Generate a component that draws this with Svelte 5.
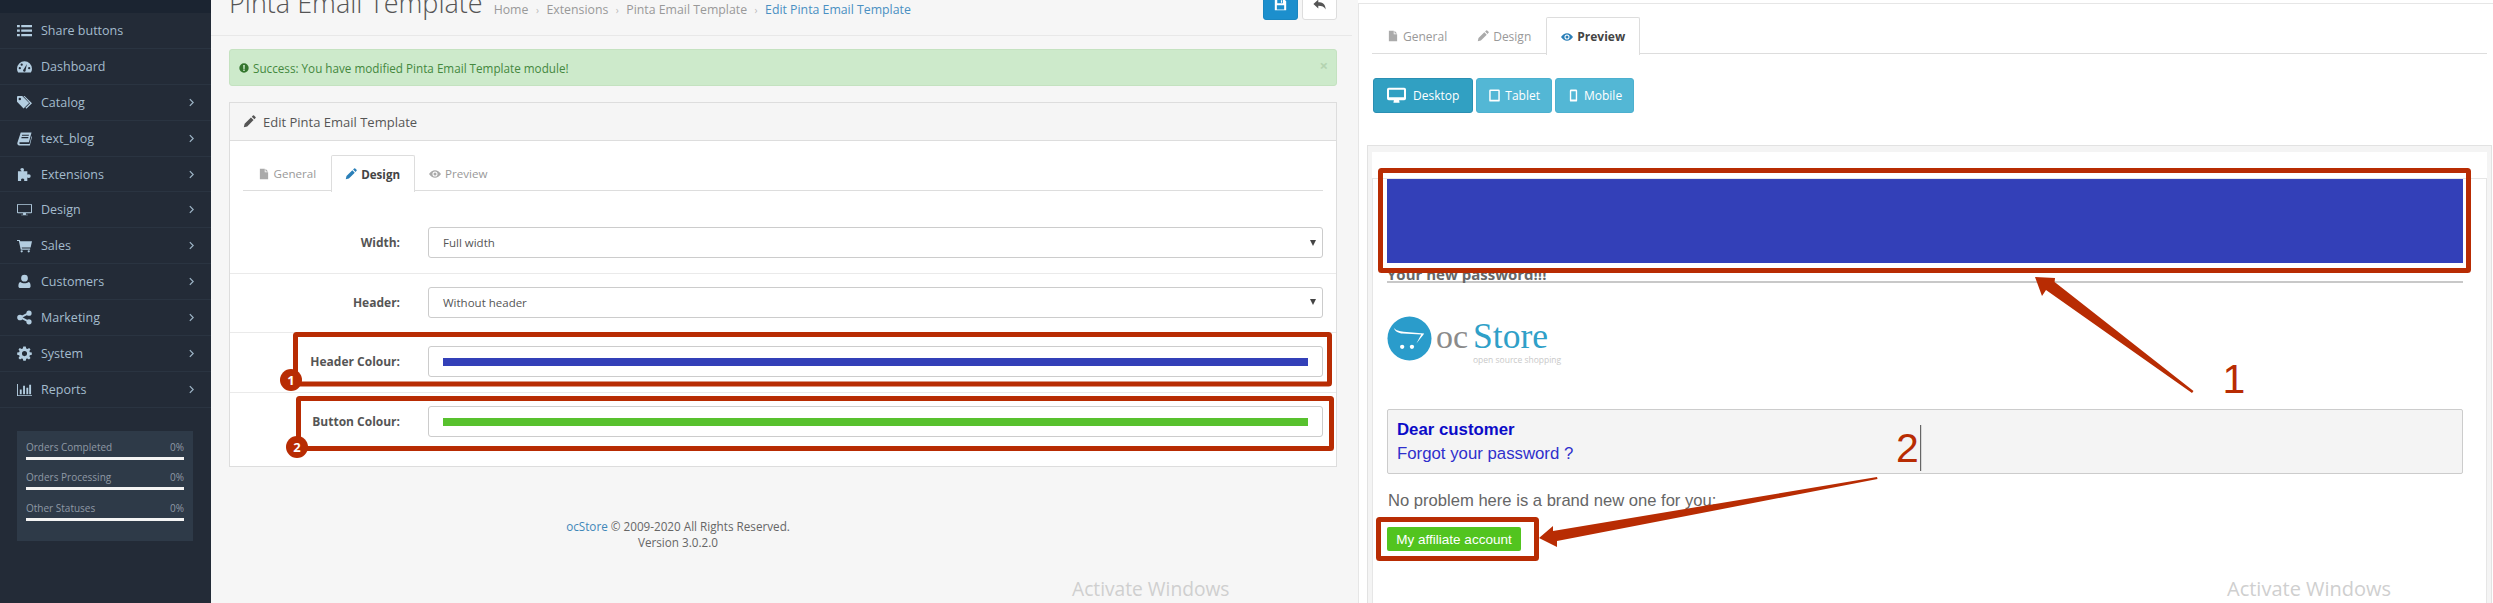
<script>
  const icons = {
    list: "M0 2h3v2.4H0zM4.5 2H16v2.4H4.5zM0 6.8h3v2.4H0zM4.5 6.8H16v2.4H4.5zM0 11.6h3V14H0zM4.5 11.6H16V14H4.5z",
    gauge: "M8 2.5a8 8 0 0 0-8 8c0 1.5.4 2.8 1.2 4h13.6c.8-1.2 1.2-2.5 1.2-4a8 8 0 0 0-8-8zM3 8.6a1.2 1.2 0 1 0 0 2.4 1.2 1.2 0 0 0 0-2.4zM5 4.8a1.2 1.2 0 1 0 0 2.4 1.2 1.2 0 0 0 0-2.4zM10.6 5.4 7.2 11a1.4 1.4 0 1 0 2 .8zM13 8.6a1.2 1.2 0 1 0 0 2.4 1.2 1.2 0 0 0 0-2.4z",
    tags: "M0 2v5.2L7 14.5 13 8.5 5.6 1H1a1 1 0 0 0-1 1zM3 3a1.3 1.3 0 1 0 0 2.6A1.3 1.3 0 0 0 3 3zM8 1l8 7.7-6 6-1-1 4.9-5L6.8 1z",
    book: "M4 1.5h11.5l-2.8 10.6H3.4c-1.4 0-1.4 1.7 0 1.7h10l2-8.2.6.6-2.3 9.2H2.6C.8 15.4 0 14 .4 12.6zM5.5 4l-.3 1.1h7.3l.3-1.1zM4.9 6.5l-.3 1.1h7.3l.3-1.1z",
    puzzle: "M5.5 1a2 2 0 0 1 2 2c0 .6-.5 1-.5 1.5h4V8c.5 0 .9-.4 1.6-.4a2 2 0 0 1 0 4c-.7 0-1.1-.4-1.6-.4v3.8H7.6c0-.6.4-1 .1-1.6a1.8 1.8 0 0 0-3.4 0c-.2.6.2 1 .2 1.6H1V4.5h3.9c0-.5-1.4-1-1.4-1.5a2 2 0 0 1 2-2z",
    desktop: "M1 2h14a1 1 0 0 1 1 1v8a1 1 0 0 1-1 1H1a1 1 0 0 1-1-1V3a1 1 0 0 1 1-1zM1 3v8h14V3zM6.5 12h3v1.5h2v.7h-7v-.7h2z",
    cart: "M0 2h3l.5 1.5H16l-1.5 6.5H5l.3 1.2H14v1.3H4L2 3.3H0zM5 13a1.2 1.2 0 1 1 0 2.4A1.2 1.2 0 0 1 5 13zM12.5 13a1.2 1.2 0 1 1 0 2.4 1.2 1.2 0 0 1 0-2.4z",
    user: "M8 .8a3.6 3.6 0 1 1 0 7.2A3.6 3.6 0 0 1 8 .8zM3.5 8.5c1 .8 2.8 1.3 4.5 1.3s3.500-.5 4.500-1.300c1.500.5 2 2.500 2 4.500 0 1.200-.8 2-2 2h-9c-1.200 0-2-.8-2-2 0-2 .5-4 2-4.500z",
    share: "M3.200 5a3 3 0 1 1 0 6 3 3 0 0 1 0-6zM12.800 .6a2.800 2.800 0 1 1 0 5.600 2.800 2.800 0 0 1 0-5.600zM12.800 9.800a2.800 2.800 0 1 1 0 5.600 2.800 2.800 0 0 1 0-5.600zM4 6.700l7.500-4 .8 1.700-7.500 4zM4.800 7.300l7.500 4-.8 1.700-7.500-4z",
    cog: "M6.700 .5H9.300L9.800 2.600 11.200 3.200 13 2 14.400 3.600 13.200 5.200 13.700 6.600 15.800 7V9.400L13.700 9.800 13.200 11 14.400 12.800 12.800 14.400 11.100 13.200 9.800 13.700 9.300 15.800H6.700L6.200 13.700 4.900 13.200 3.200 14.400 1.600 12.800 2.800 11 2.300 9.800 .2 9.400V7L2.300 6.600 2.800 5.200 1.600 3.600 3 2 4.800 3.200 6.200 2.600ZM8 5.400a2.700 2.700 0 1 0 0 5.400 2.700 2.700 0 0 0 0-5.400z",
    bars: "M0 2h1v12h15v1H0zM3 8h2v5H3zM6.500 4h2v9h-2zM10 6h2v7h-2zM13 3h2v10h-2z",
    file: "M2.500 1H9v4.500h4.500V15h-11zM10 1l3.500 3.500H10z",
    pencil: "M1 15l1-4.200 7.800-7.800 3.200 3.200-7.800 7.800zM10.800 2l1.400-1.400a1 1 0 0 1 1.400 0l1.800 1.800a1 1 0 0 1 0 1.400L14 5.200z",
    eye: "M0 8c2-3 5-5 8-5s6 2 8 5c-2 3-5 5-8 5s-6-2-8-5zM8 4.600a3.400 3.400 0 1 0 0 6.800 3.400 3.400 0 0 0 0-6.800zM8 6a2 2 0 1 1 0 4 2 2 0 0 1 0-4z",
    monitor: "M1.500 1.500h13a1.500 1.500 0 0 1 1.500 1.500v7.600a1.500 1.500 0 0 1-1.500 1.500h-13A1.500 1.500 0 0 1 0 10.600V3a1.500 1.500 0 0 1 1.500-1.500zM1.700 3.200v6.200h12.600V3.200zM5.800 12.100h4.400l.4 2H5.400z",
    tablet: "M3 .5h10a1.500 1.500 0 0 1 1.500 1.500v12a1.500 1.500 0 0 1-1.500 1.500H3A1.500 1.500 0 0 1 1.500 14V2A1.500 1.500 0 0 1 3 .5zM3.300 2.600v10.600h9.400V2.600z",
    phone: "M5 .5h6A1.500 1.500 0 0 1 12.500 2v12a1.500 1.500 0 0 1-1.500 1.500H5A1.500 1.500 0 0 1 3.500 14V2A1.500 1.500 0 0 1 5 .5zM5.200 2.800v10h5.600v-10z",
    save: "M1 1h11l3 3v11H1zM4 2v4.500h7V2zM3.500 9v5h9V9zM8.500 2.800h1.500v3H8.500z",
    reply: "M6.500 2v3.200c5 0 9 2 9 8.800-1.500-3.500-4.500-4.600-9-4.600V13L.5 7.500z",
    alert: "M8 .5a7.500 7.500 0 1 1 0 15 7.500 7.500 0 0 1 0-15zM6.700 3.200l.3 6.200h2l.3-6.200zM6.800 10.500v2.300h2.400v-2.300z"
  };
  const nav = [
    ["list", "Share buttons", false], ["gauge", "Dashboard", false], ["tags", "Catalog", true],
    ["book", "text_blog", true], ["puzzle", "Extensions", true], ["desktop", "Design", true],
    ["cart", "Sales", true], ["user", "Customers", true], ["share", "Marketing", true],
    ["cog", "System", true], ["bars", "Reports", true]
  ];
  const stats = ["Orders Completed", "Orders Processing", "Other Statuses"];
  const crumbs = ["Home", "Extensions", "Pinta Email Template"];
</script>

{#snippet icon(name, cls)}
  <svg class={cls} viewBox="0 0 16 16" fill-rule={name === "share" ? "nonzero" : "evenodd"} fill="currentColor" aria-hidden="true"><path d={icons[name]} /></svg>
{/snippet}

<div class="app">
  <aside class="side">
    <div class="strip"></div>
    <ul class="nav">
      {#each nav as [ic, label, more]}
        <li>
          {@render icon(ic, "nav-ic")}
          <span class="nav-label">{label}</span>
          {#if more}
            <svg class="chev" viewBox="0 0 6 10" aria-hidden="true"><path d="M1 1l4 4-4 4" fill="none" stroke="currentColor" stroke-width="1.500" /></svg>
          {/if}
        </li>
      {/each}
    </ul>
    <div class="stats">
      {#each stats as s}
        <div class="stat">
          <div class="stat-row"><span>{s}</span><span>0%</span></div>
          <div class="stat-bar"></div>
        </div>
      {/each}
    </div>
  </aside>

  <main class="left">
    <header class="page-head">
      <h1>Pinta Email Template</h1>
      <nav class="crumbs">
        {#each crumbs as c}
          <span>{c}</span><i>›</i>
        {/each}
        <span class="current">Edit Pinta Email Template</span>
      </nav>
      <div class="actions">
        <div class="act primary">{@render icon("save", "act-ic")}</div>
        <div class="act">{@render icon("reply", "act-ic")}</div>
      </div>
    </header>

    <div class="alert">
      {@render icon("alert", "alert-ic")}
      <span>Success: You have modified Pinta Email Template module!</span>
      <b class="close">×</b>
    </div>

    <section class="panel">
      <div class="panel-head">
        {@render icon("pencil", "head-ic")}
        <span>Edit Pinta Email Template</span>
      </div>
      <div class="panel-body">
        <div class="tabs">
          <div class="tab">{@render icon("file", "tab-ic")}General</div>
          <div class="tab active">{@render icon("pencil", "tab-ic")}Design</div>
          <div class="tab">{@render icon("eye", "tab-ic")}Preview</div>
        </div>
        <div class="form">
          <div class="row">
            <label>Width:</label>
            <div class="control"><span>Full width</span><em class="caret"></em></div>
          </div>
          <div class="row">
            <label>Header:</label>
            <div class="control"><span>Without header</span><em class="caret"></em></div>
          </div>
          <div class="row">
            <label>Header Colour:</label>
            <div class="control"><div class="swatch blue"></div></div>
          </div>
          <div class="row">
            <label>Button Colour:</label>
            <div class="control"><div class="swatch green"></div></div>
          </div>
        </div>
      </div>
    </section>

    <footer class="foot">
      <div><a href="#top">ocStore</a> © 2009-2020 All Rights Reserved.</div>
      <div>Version 3.0.2.0</div>
    </footer>
  </main>

  <section class="right">
    <div class="tabs">
      <div class="tab">{@render icon("file", "tab-ic")}General</div>
      <div class="tab">{@render icon("pencil", "tab-ic")}Design</div>
      <div class="tab active">{@render icon("eye", "tab-ic")}Preview</div>
    </div>
    <div class="devices">
      <div class="dev on">{@render icon("monitor", "dev-ic big")}Desktop</div>
      <div class="dev">{@render icon("tablet", "dev-ic")}Tablet</div>
      <div class="dev">{@render icon("phone", "dev-ic")}Mobile</div>
    </div>
    <div class="frame">
      <div class="sheet">
        <div class="inner">
          <div class="mail-head"></div>
          <div class="mail-title">Your new password!!!</div>
          <div class="logo">
            <svg class="logo-mark" viewBox="0 0 46 46" aria-hidden="true">
              <circle cx="23" cy="23" r="22.500" fill="#2a9ccb" />
              <path d="M7 12c2 3 6 3.500 10 4l21 2-1 1.500-7 8.500 5-9-19-1c-4-.5-8-2-9-6z" fill="#fff" />
              <circle cx="15.500" cy="31.500" r="2.200" fill="#fff" />
              <circle cx="25.500" cy="31.500" r="2.200" fill="#fff" />
            </svg>
            <div class="logo-words">
              <div class="logo-name"><span class="oc">oc</span><span class="store">Store</span></div>
              <div class="logo-tag">open source shopping</div>
            </div>
          </div>
          <div class="greet">
            <div class="dear">Dear customer</div>
            <div class="forgot">Forgot your password ?</div>
          </div>
          <p class="copy">No problem here is a brand new one for you:</p>
          <div class="cta">My affiliate account</div>
        </div>
      </div>
    </div>
  </section>

  <div class="watermark wm-left">Activate Windows</div>
  <div class="watermark wm-right">Activate Windows</div>

  <svg class="notes" viewBox="0 0 2493 603" aria-hidden="true">
    <g fill="none" stroke="#b82c03" stroke-width="5" stroke-linejoin="round">
      <rect x="295.500" y="334.500" width="1034" height="49.500" rx="1" />
      <rect x="298.500" y="398.500" width="1033" height="50" rx="1" />
      <rect x="1380.500" y="170.500" width="1088" height="100" rx="1" />
      <rect x="1378.500" y="519.500" width="158" height="39" rx="1" />
    </g>
    <g fill="#b82c03">
      <circle cx="291" cy="380" r="11" />
      <circle cx="297" cy="447" r="11" />
      <polygon points="2035,277 2055,278 2054.600,282 2193.500,391 2192,393 2046,290 2042,296" />
      <polygon points="1539,538 1553,526 1553,531 1877,477 1877.500,479 1557,541 1557,547" />
    </g>
    <g class="badge">
      <text x="291" y="385">1</text>
      <text x="297" y="452">2</text>
    </g>
    <g class="digit">
      <text x="2222.500" y="393">1</text>
      <text x="1896" y="462">2</text>
    </g>
    <rect x="1920" y="425" width="1.200" height="46" fill="#666" />
  </svg>
</div>

<style>
  :global(body) { margin: 0; background: #fff; }
  * { box-sizing: border-box; }
  .app {
    position: relative; display: flex; width: 2493px; height: 603px; overflow: hidden;
    font-family: "Open Sans", "Liberation Sans", sans-serif; font-size: 12px; color: #555;
  }

  .side { flex: 0 0 211px; background: #232b37; color: #a4bccd; }
  .strip { height: 13px; background: #1b2431; }
  .nav { list-style: none; margin: 0; padding: 0; }
  .nav li {
    display: flex; align-items: center; height: 35.900px; padding: 0 17px 0 17px;
    border-bottom: 1px solid #2a3441;
  }
  .nav-ic { width: 15px; height: 15px; flex: none; color: #b3cde0; }
  .nav-label { margin-left: 9px; font-size: 12.500px; flex: 1; }
  .chev { width: 5px; height: 9px; color: #9db4c5; }
  .stats { margin: 23px 18px 0 17px; padding: 9px 9px 10px; background: #2e3a48; color: #8e99a5; font-size: 10px; }
  .stat { height: 30.500px; }
  .stat-row { display: flex; justify-content: space-between; line-height: 14px; }
  .stat-bar { height: 3px; margin-top: 3px; background: #f4f4f4; }

  .left { flex: 0 0 1147px; padding: 0 21px 0 18px; background: #f6f6f6; }
  .page-head {
    display: flex; align-items: flex-start; height: 36px; margin: 0 -15px 0 -18px; padding: 0 15px 0 18px;
    border-bottom: 1px solid #e8e8e8; overflow: hidden;
  }
  h1 { margin: -17px 0 0; font-size: 27px; font-weight: 300; line-height: 40px; color: #555; white-space: nowrap; }
  .crumbs { display: flex; align-items: center; margin: 1px 0 0 11px; height: 17px; color: #999; font-size: 12.300px; }
  .crumbs i { margin: 0 7.500px; font-style: normal; font-size: 10px; color: #bbb; }
  .current { color: #4a90c2; }
  .actions { display: flex; gap: 4px; margin-left: auto; margin-top: -16px; }
  .act {
    display: flex; align-items: flex-end; justify-content: center; width: 35px; height: 36px; padding-bottom: 8px;
    background: #fff; border: 1px solid #ddd; border-radius: 3px; color: #555;
  }
  .act.primary { background: #1c8fcd; border-color: #1a86c0; color: #fff; }
  .act-ic { width: 13px; height: 13px; }

  .alert {
    display: flex; align-items: center; height: 37px; margin-top: 13px; padding: 0 9px;
    background: #cdeacb; border: 1px solid #c4e2c0; border-radius: 3px; color: #44883e; font-size: 11.700px;
  }
  .alert-ic { width: 10px; height: 10px; margin-right: 4px; color: #33752d; }
  .close { margin-left: auto; font-size: 15px; color: #b4d3b1; line-height: 1; margin-top: -4px; margin-right: -1px; }

  .panel { margin-top: 16px; background: #fff; border: 1px solid #ddd; }
  .panel-head {
    display: flex; align-items: center; height: 38px; padding: 0 13px; background: #f5f5f5;
    border-bottom: 1px solid #ddd; color: #555; font-size: 13px;
  }
  .head-ic { width: 13px; height: 13px; margin-right: 7px; color: #555; }
  .panel-body { padding: 14px 13px 14px; }

  .tabs { display: flex; height: 36px; border-bottom: 1px solid #ddd; }
  .tab {
    display: flex; align-items: center; height: 36px; padding: 0 13.500px; color: #999; font-size: 11.600px;
    border: 1px solid transparent; border-bottom: 0;
  }
  .tab-ic { width: 12px; height: 12px; margin-right: 4px; color: #aaa; }
  .tab.active {
    background: #fff; border-color: #ddd; color: #444; font-weight: 700; height: 37px; border-radius: 2px 2px 0 0;
  }
  .tab.active .tab-ic { color: #2a7fb8; }
  .right .tabs { height: 37px; }
  .right .tab { height: 37px; padding: 0 14px; font-size: 12px; }
  .right .tab.active { height: 38px; }

  .form { margin: 23px -13px 0; }
  .row {
    display: flex; align-items: center; height: 59.500px; padding: 0 13px 1px; border-bottom: 1px solid #eaeaea;
  }
  .row:last-child { border-bottom: 0; }
  .row label { flex: 0 0 157px; text-align: right; font-weight: 700; color: #555; font-size: 12px; }
  .control {
    flex: 1; display: flex; align-items: center; justify-content: space-between; height: 31px; margin-left: 28px;
    padding: 0 6px 0 14px; background: #fff; border: 1px solid #ccc; border-radius: 3px; color: #555; font-size: 11.500px;
  }
  .caret { width: 0; height: 0; border-left: 3px solid transparent; border-right: 3px solid transparent; border-top: 6px solid #444; }
  .swatch { flex: 1; height: 8px; margin-right: 8px; }
  .blue { background: #3340b8; }
  .green { background: #58c12e; }

  .foot { margin: 51px 210px 0 0; text-align: center; line-height: 16px; color: #666; font-size: 11.700px; }
  .foot a { color: #3f87b8; text-decoration: none; }

  .right {
    flex: 1; margin-top: 3px; padding: 13px 6px 0 13px; background: #fff;
    border-top: 1px solid #e6e6e6; border-left: 1px solid #e6e6e6; min-width: 0;
  }
  .devices { display: flex; gap: 3px; margin: 24px 0 0 1px; }
  .dev {
    display: flex; align-items: center; height: 35px; padding: 0 11px; background: #53b7d5; border: 1px solid #4cb0cf;
    border-radius: 3px; color: #fff; font-size: 12px;
  }
  .dev.on { padding: 0 13px; background: #31a0c2; border-color: #2a8fb3; }
  .dev-ic { width: 13px; height: 15px; margin-right: 4px; }
  .dev-ic.big { width: 19px; height: 19px; margin-right: 7px; }

  .frame { margin: 32px -5px 0 -5px; padding: 6px 4px 0 4px; height: 460px; border: 1px solid #e2e2e2; border-bottom: 0; background: #f4f4f4; }
  .sheet { height: 100%; padding-top: 26px; background: #fff; }
  .inner { height: 100%; padding: 0 23px 0 14px; background: #fff; border: 1px solid #e6e6e6; border-bottom: 0; }
  .mail-head { height: 84px; background: #3340b8; }
  .mail-title {
    padding-top: 3px; line-height: 17px; height: 20px; font-weight: 700; font-size: 15px; color: #666;
    border-bottom: 2px solid #c8c8c8;
  }
  .logo { display: flex; align-items: flex-start; margin-top: 33px; }
  .logo-mark { width: 45px; height: 45px; flex: none; }
  .logo-words { margin-left: 4px; }
  .logo-name { display: flex; align-items: baseline; font-family: "Liberation Serif", serif; line-height: 36px; margin-top: 2px; }
  .oc { font-size: 34px; color: #8b8b8b; margin-right: 5px; }
  .store { font-size: 35.500px; color: #2fa0c8; }
  .logo-tag { margin: -1px 0 0 37px; font-size: 8.500px; line-height: 11px; color: #c9c9c9; white-space: nowrap; }
  .greet {
    height: 65px; margin-top: 44px; padding: 8px 9px 0; background: #f4f4f4; border: 1px solid #ccc; border-radius: 2px;
    font-family: "Liberation Sans", Arial, sans-serif; font-size: 16.800px; line-height: 24px;
  }
  .dear { font-weight: 700; color: #0b0bc8; }
  .forgot { color: #2f2fcc; }
  .copy { margin: 17px 0 0 1px; font-family: "Liberation Sans", Arial, sans-serif; font-size: 16.600px; line-height: 19px; color: #666; }
  .cta {
    display: flex; align-items: center; justify-content: center; width: 134px; height: 24px; margin-top: 17px;
    background: #52c41f; border-radius: 2px; color: #fff; font-family: "Liberation Sans", Arial, sans-serif; font-size: 13.500px;
  }

  .watermark { position: absolute; top: 575px; font-size: 20px; line-height: 28px; color: #cfcfcf; white-space: nowrap; }
  .wm-left { left: 1072px; font-size: 19.200px; }
  .wm-right { left: 2227px; }

  .notes { position: absolute; inset: 0; width: 2493px; height: 603px; pointer-events: none; }
  .badge text { font-family: "Open Sans", sans-serif; font-weight: 700; font-size: 13px; fill: #fff; text-anchor: middle; }
  .digit text { font-family: "Liberation Sans", Arial, sans-serif; font-size: 41px; fill: #b82c03; }
</style>
